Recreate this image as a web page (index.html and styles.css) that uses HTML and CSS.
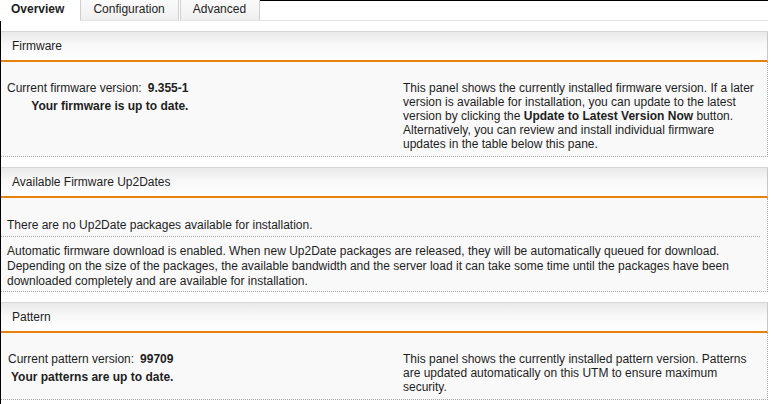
FILE: index.html
```html
<!DOCTYPE html>
<html>
<head>
<meta charset="utf-8">
<link rel="stylesheet" href="styles.css">
</head>
<body>
<div class="tabbar">
  <div class="tab active">Overview</div>
  <div class="tab">Configuration</div>
  <div class="tab">Advanced</div>
  <div class="tabfill"></div>
</div>
<div class="main">
  <section class="panel">
    <div class="phead">Firmware</div>
    <div class="pbody two">
      <div class="left">
        <div class="kv"><span class="k">Current firmware version:</span><span class="v">9.355-1</span></div>
        <div class="status">Your firmware is up to date.</div>
      </div>
      <div class="right">This panel shows the currently installed firmware version. If a later version is available for installation, you can update to the latest version by clicking the <b>Update to Latest Version Now</b> button. Alternatively, you can review and install individual firmware updates in the table below this pane.</div>
    </div>
  </section>
  <section class="panel">
    <div class="phead">Available Firmware Up2Dates</div>
    <div class="pbody list">
      <div class="row first">There are no Up2Date packages available for installation.</div>
      <div class="row second">Automatic firmware download is enabled. When new Up2Date packages are released, they will be automatically queued for download. Depending on the size of the packages, the available bandwidth and the server load it can take some time until the packages have been downloaded completely and are available for installation.</div>
    </div>
  </section>
  <section class="panel">
    <div class="phead">Pattern</div>
    <div class="pbody two pat">
      <div class="left">
        <div class="kv"><span class="k">Current pattern version:</span><span class="v">99709</span></div>
        <div class="status">Your patterns are up to date.</div>
      </div>
      <div class="right">This panel shows the currently installed pattern version. Patterns are updated automatically on this UTM to ensure maximum security.</div>
    </div>
  </section>
</div>
</body>
</html>
```
FILE: styles.css
```css
html, body {
  margin: 0;
  padding: 0;
  background: #fff;
}
body {
  font-family: "Liberation Sans", Arial, sans-serif;
  font-size: 12px;
  color: #1e1e1e;
  width: 771px;
  height: 404px;
  overflow: hidden;
}
.tabbar {
  display: flex;
  height: 21px;
}
.tab {
  box-sizing: border-box;
  height: 21px;
  line-height: 18px;
  padding: 0 13px 0 12px;
  background: linear-gradient(#fafafa, #efefef);
  border-left: 1px solid #cfcfcf;
  border-right: 1px solid #cfcfcf;
  border-bottom: 1px solid #e4e4e4;
  margin-left: 1px;
}
.tab.active {
  background: #fff;
  font-weight: bold;
  border: none;
  margin-left: 0;
  padding: 0 15px 0 11px;
}
.tabfill {
  flex: 1;
  border-top: 1px solid #000;
  border-bottom: 1px solid #e4e4e4;
  margin-right: 3px;
  box-sizing: border-box;
}
.main {
  border-left: 1px solid #000;
  padding-top: 10px;
  height: 400px;
  box-sizing: border-box;
}
.panel {
  margin-right: 3px;
  margin-bottom: 10px;
}
.phead {
  height: 28px;
  line-height: 28px;
  padding-left: 11px;
  border-top: 1px solid #d6d6d6;
  border-right: 1px solid #c8c8c8;
  border-bottom: 2px solid #e8820c;
  background: linear-gradient(#e9e9e9, #f8f8f8 45%, #fff);
}
.pbody {
  background: #f9f9f9;
  border-right: 1px dotted #a8a8a8;
  border-bottom: 1px dotted #a8a8a8;
}
.two {
  display: grid;
  grid-template-columns: 398px 1fr;
  padding: 19px 0 5px 0;
  line-height: 14px;
}
.left {
  padding-left: 6px;
  display: inline-grid;
  justify-self: start;
  align-self: start;
}
.kv {
  display: flex;
  gap: 6px;
  line-height: 14px;
}
.v, .status {
  font-weight: bold;
}
.status {
  justify-self: end;
  margin-top: 4px;
}
.right {
  padding: 0 8px 0 4px;
}
.pat .left {
  padding-left: 7px;
}
.list {
  padding: 20px 0 0 0;
}
.row {
  padding-left: 6px;
}
.row.first {
  line-height: 14px;
  padding-bottom: 4px;
  margin-right: 7px;
  border-bottom: 1px dotted #a8a8a8;
}
.row.second {
  line-height: 15px;
  padding: 7px 30px 2px 6px;
}
```
